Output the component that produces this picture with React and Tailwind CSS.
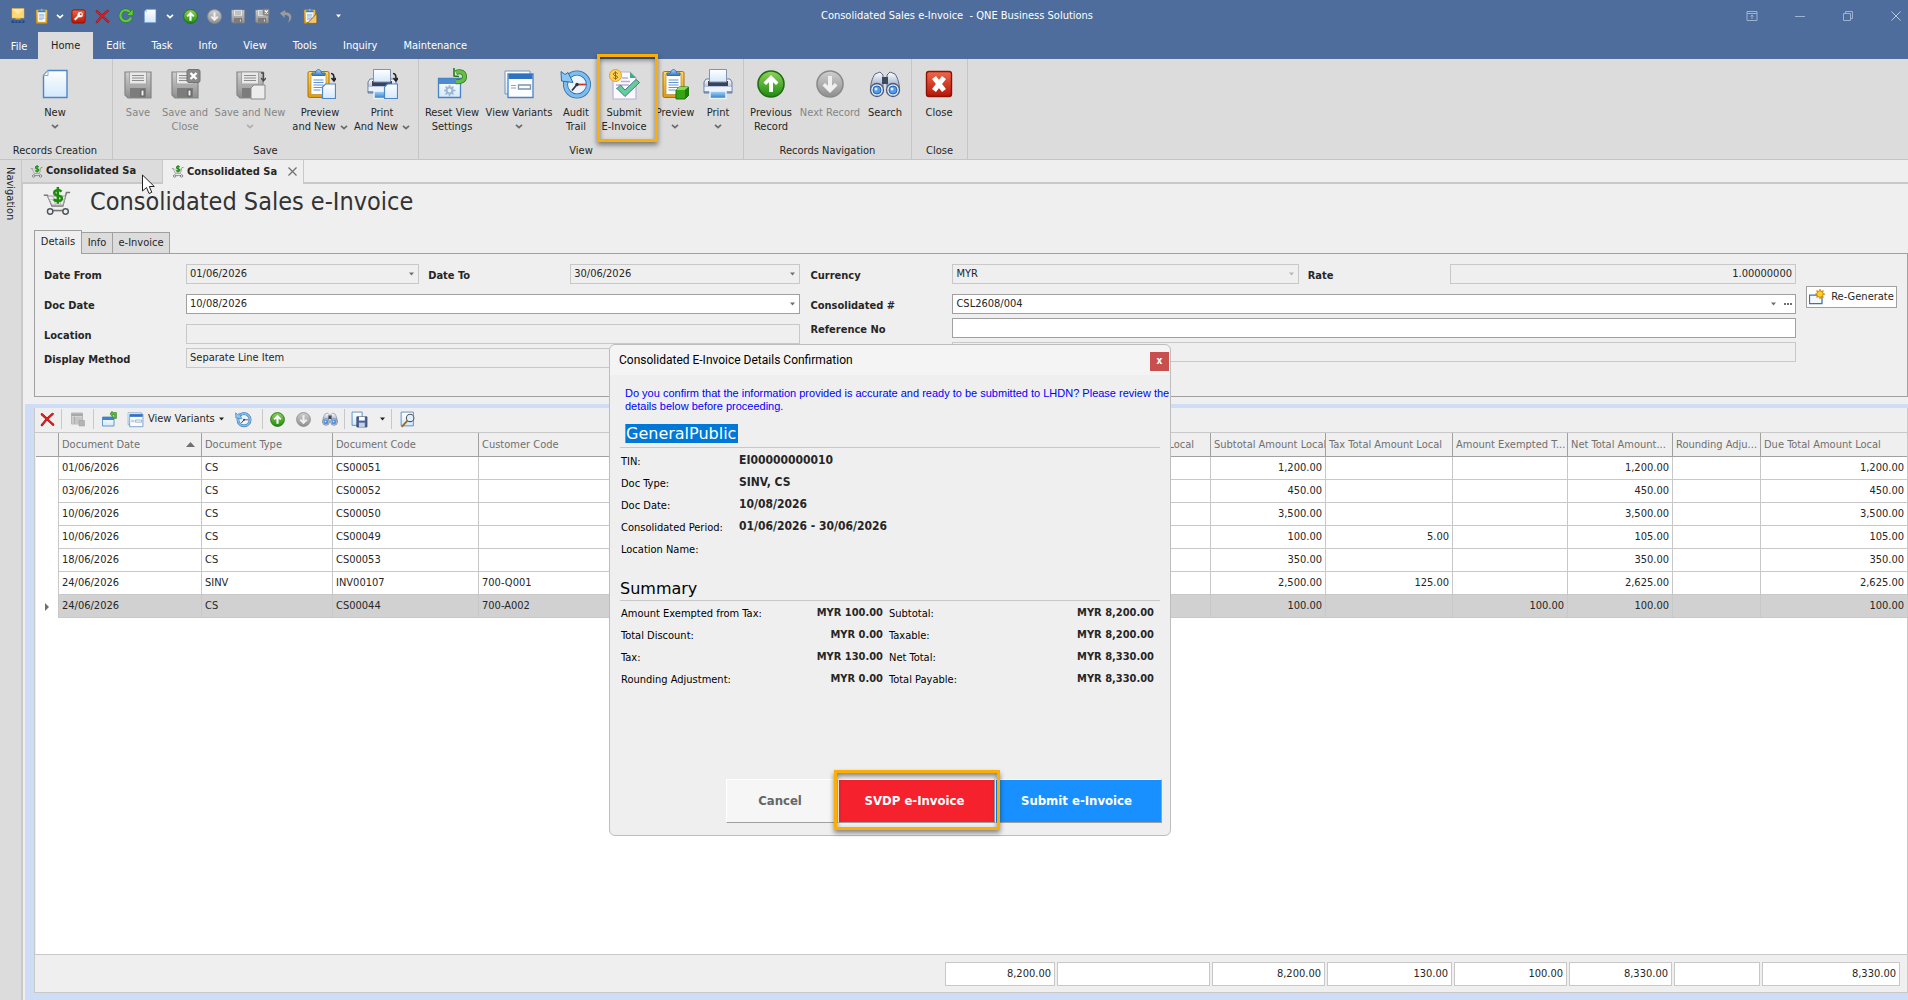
import React from 'react';

// Shared gradients, referenced by id from every icon below
const IconDefs = () => {
  const ramps = [
    ['gGreen', '#8fd35a', '#1f8a10'],
    ['gGray', '#cfcfcf', '#8e8e8e'],
    ['gBlue', '#a9dcff', '#2f78c4'],
    ['gPaper', '#ffffff', '#d3e8fb'],
    ['gGold', '#ffd85a', '#dc9a12'],
    ['gRed', '#f0694c', '#b51507'],
    ['gSteel', '#ffffff', '#7f93b8'],
  ];
  return (
    <svg width="0" height="0" className="absolute" aria-hidden="true">
      <defs>
        {ramps.map(([id, from, to]) => (
          <linearGradient key={id} id={id} x1="0" y1="0" x2="0" y2="1">
            <stop offset="0" stopColor={from} />
            <stop offset="1" stopColor={to} />
          </linearGradient>
        ))}
      </defs>
    </svg>
  );
};

const Icon = ({ size = 32, children }) => (
  <svg width={size} height={size} viewBox="0 0 32 32" fill="none" className="shrink-0" aria-hidden="true">
    {children}
  </svg>
);

const Caret = ({ color = '#6b6b6b' }) => (
  <svg width="8" height="5" viewBox="0 0 8 5" fill="none" className="shrink-0" aria-hidden="true">
    <path d="M1 0.8L4 3.6L7 0.8" stroke={color} strokeWidth="1.7" />
  </svg>
);

const SolidCaret = ({ color = '#222', className = '' }) => (
  <svg width="5" height="4" viewBox="0 0 5 4" className={'shrink-0 ' + className} aria-hidden="true">
    <path d="M0 0.5h5L2.5 3.5z" fill={color} />
  </svg>
);

const NewDoc = ({ size }) => (
  <Icon size={size}>
    <path d="M9 2.5h19v27H4.5V7.5z" fill="url(#gPaper)" stroke="#4d87c7" strokeWidth="1.4" />
    <path d="M9 2.5v5H4.5z" fill="#fff" stroke="#7fabdb" strokeWidth="1" />
  </Icon>
);

const Floppy = ({ size, mark }) => (
  <Icon size={size}>
    <path d="M3 4h26v26H6l-3-3z" fill="url(#gGray)" stroke="#858585" strokeWidth="1.2" />
    <rect x="7.5" y="4" width="17" height="12" fill="#e9e9e9" stroke="#a5a5a5" />
    <path d="M10 7.5h12M10 10h12M10 12.5h12" stroke="#8c8c8c" strokeWidth="1.2" />
    <rect x="8" y="20" width="16" height="9.5" fill="#7c7c7c" />
    <rect x="19" y="22" width="3" height="6" fill="#f2f2f2" stroke="#5c5c5c" />
    {mark === 'close' && (
      <>
        <rect x="18" y="1.5" width="13" height="13" rx="2" fill="#8a8a8a" stroke="#727272" />
        <path d="M21.5 5l6 6M27.5 5l-6 6" stroke="#fff" strokeWidth="2.4" />
      </>
    )}
    {mark === 'new' && (
      <>
        <path d="M20 17h11v14H17V20z" fill="#ececec" stroke="#8a8a8a" />
        <path d="M27 5h2.5v7M27 10l2.5 3 2.5-3" stroke="#4a4a4a" strokeWidth="1.3" />
      </>
    )}
  </Icon>
);

const Clipboard = ({ size, mark }) => (
  <Icon size={size}>
    <rect x="4" y="3.5" width="21" height="26" rx="1.5" fill="url(#gGold)" stroke="#a9720b" />
    <path d="M7 6h15v20.5H7z" fill="#fdfeff" stroke="#b98a2c" strokeWidth=".7" />
    <path d="M9.5 12h10M9.5 14.5h10M9.5 17h10M9.5 19.5h10M9.5 22h7" stroke="#6493cd" strokeWidth="1.1" />
    <path d="M8 7.5V5h3.5c.5-4.5 5.5-4.5 6 0H21v2.5z" fill="url(#gBlue)" stroke="#3c6ca8" />
    {mark === 'cube' && (
      <>
        <path d="M17 22l3-3h9.5v8.5L26 31h-9z" fill="#37a416" stroke="#1f7409" />
        <path d="M17 22l3-3h9.5L26 22z" fill="#83dc52" />
        <path d="M26 22l3.5-3v8.5L26 31z" fill="#1f7d0b" />
      </>
    )}
    {mark === 'new' && <NewMark />}
    {mark === 'ruler' && <path d="M28 10v19H10z" fill="#f3c66b" stroke="#7d5312" strokeWidth="1.5" />}
  </Icon>
);

const NewMark = () => (
  <>
    <path d="M21.5 16h10v14.5h-13V19z" fill="url(#gPaper)" stroke="#4d87c7" strokeWidth="1.2" />
    <path d="M27 5.5c2.5 0 3 1.5 3 6M27.5 10l2.5 3 2-3" stroke="#222" strokeWidth="1.6" />
  </>
);

const Printer = ({ size, mark }) => (
  <Icon size={size}>
    <path d="M2 14l2-3h24l2 3v11H2z" fill="url(#gSteel)" stroke="#6a7ca3" />
    <path d="M6 13h20v5H6z" fill="#36425e" />
    <path d="M7.5 1.5h17V14h-17z" fill="url(#gPaper)" stroke="#8391ad" />
    <path d="M2.5 19h27v4h-27z" fill="#eef2fa" />
    <path d="M8 23h16v7.5H8z" fill="url(#gBlue)" stroke="#eaf4ff" strokeWidth="1.4" />
    {mark === 'new' && <NewMark />}
  </Icon>
);

const ResetView = ({ size }) => (
  <Icon size={size}>
    <path d="M2.5 10.5h22v19h-22z" fill="url(#gPaper)" stroke="#4a83c3" strokeWidth="1.3" />
    <path d="M3 11h21v5H3z" fill="#4b8bd2" />
    <circle cx="13.5" cy="22.5" r="3" stroke="#9db7d2" strokeWidth="2.2" />
    <path d="M13.5 17v2M13.5 26v2.5M8 22.5h2M17 22.5h2.5M9.5 18.5l1.5 1.5M16 25l1.5 1.5M17.5 18.5L16 20M11 25l-1.5 1.5" stroke="#9db7d2" strokeWidth="1.6" />
    <path d="M20 4.5c4.500-2 8.500 0 8.500 4.200 0 3.800-4 5.500-8.500 5" stroke="#2c7a1a" strokeWidth="5" />
    <path d="M20 4.5c4.500-2 8.500 0 8.500 4.200 0 3.800-4 5.500-8.500 5" stroke="#66bd47" strokeWidth="3.4" />
    <path d="M18 0v8l5 .5" stroke="#2c7a1a" strokeWidth="1.6" />
  </Icon>
);

const Variants = ({ size }) => (
  <Icon size={size}>
    <path d="M2 3h25v23H2z" fill="url(#gPaper)" stroke="#6e96c4" />
    <path d="M5 6h25v23.5H5z" fill="#fbfdff" stroke="#4a83c3" strokeWidth="1.3" />
    <path d="M5.5 6h24v5h-24z" fill="#2f72c2" />
    <path d="M8 17.5h5M8 20h5" stroke="#8ba5c0" strokeWidth="1.2" />
    <path d="M15.5 17h12v4h-12z" stroke="#7c93ad" strokeWidth="1.3" />
  </Icon>
);

const History = ({ size }) => (
  <Icon size={size}>
    <circle cx="17" cy="16.5" r="11.5" fill="#eaf5ff" stroke="#2e6cae" strokeWidth="5" />
    <circle cx="17" cy="16.5" r="11.5" stroke="#7fbdec" strokeWidth="3.4" />
    <path d="M1 3.5l4 3 3-2 5 10L1.5 13z" fill="#8cc7f3" stroke="#2e6cae" />
    <path d="M17 16.5l-5 6" stroke="#333" strokeWidth="1.8" />
    <path d="M17 16.5h9" stroke="#d3372a" strokeWidth="1.8" />
    <circle cx="17" cy="16.5" r="1.7" fill="#333" />
  </Icon>
);

const SubmitInvoice = ({ size }) => (
  <Icon size={size}>
    <path d="M5 4h17l6 6v21H5z" fill="#fbfaff" stroke="#b9b0dc" strokeWidth="1.2" />
    <path d="M22 4v6h6z" fill="#3fae7c" />
    <path d="M14 10h6M13 13.5h9M8 17h13M8 20.5h5" stroke="#b8afd8" strokeWidth="1.5" />
    <circle cx="7.5" cy="7.5" r="6" fill="#ffd257" stroke="#d9a22d" />
    <path d="M9.8 5.5c-1.5-1.4-4.4-1-4.4.7 0 2 4.2 1 4.2 2.9 0 1.7-2.9 1.9-4.4.5M7.5 3.3v8.4" stroke="#94690b" />
    <path d="M9 20.5l3.5-3.5 4.5 5 11-10.5 3.5 3L17 28.5z" fill="#63cf95" stroke="#46709c" strokeWidth="1" />
  </Icon>
);

const RoundArrow = ({ size, down, off }) => (
  <Icon size={size}>
    <circle cx="16" cy="16" r="13" fill={off ? 'url(#gGray)' : 'url(#gGreen)'} stroke={off ? '#8a8a8a' : '#1f6d12'} strokeWidth="1.6" />
    <path
      d={down ? 'M16 25l-7.5-7.5 2.5-2.5 3 2.8V8h4v9.8l3-2.8 2.5 2.5z' : 'M16 7l7.5 7.5L21 17l-3-2.8V24h-4v-9.8L11 17l-2.5-2.5z'}
      fill={off ? '#efefef' : '#fff'}
    />
  </Icon>
);

const Binoculars = ({ size }) => (
  <Icon size={size}>
    <path d="M6 6l5-2 3 3v16H1.5C1 18 3 10 6 6zM26 6l-5-2-3 3v16h12.5C31 18 29 10 26 6z" fill="url(#gSteel)" stroke="#5a6884" />
    <path d="M13 9h6v7h-6z" fill="#3d475f" />
    <circle cx="8" cy="22" r="6.5" fill="#dfe8f5" stroke="#4c5b7a" strokeWidth="1.3" />
    <circle cx="24" cy="22" r="6.5" fill="#dfe8f5" stroke="#4c5b7a" strokeWidth="1.3" />
    <circle cx="8" cy="22" r="4" fill="#4f9bf0" stroke="#2763b0" />
    <circle cx="24" cy="22" r="4" fill="#4f9bf0" stroke="#2763b0" />
    <circle cx="7" cy="21" r="1.5" fill="#d9efff" />
    <circle cx="23" cy="21" r="1.5" fill="#d9efff" />
  </Icon>
);

const CloseBox = ({ size }) => (
  <Icon size={size}>
    <rect x="3.5" y="3.5" width="25" height="25" rx="2.5" fill="url(#gRed)" stroke="#8e1206" strokeWidth="1.4" />
    <path d="M11 9.5l10 13M21 9.5l-10 13" stroke="#fff" strokeWidth="5" />
  </Icon>
);

const RedCross = ({ size }) => (
  <Icon size={size}>
    <path d="M4 5c7 6 14 13 24 22M27 4C18 11 11 18 4 28" stroke="#8f0d0d" strokeWidth="5" strokeLinecap="round" />
    <path d="M4 5c7 6 14 13 24 22M27 4C18 11 11 18 4 28" stroke="#e02020" strokeWidth="3.2" strokeLinecap="round" />
  </Icon>
);

const KeyBox = ({ size }) => (
  <Icon size={size}>
    <rect x="2" y="2" width="28" height="28" rx="4" fill="url(#gRed)" stroke="#8e1206" strokeWidth="2" />
    <circle cx="19.5" cy="12" r="5.5" fill="#fff" />
    <circle cx="21" cy="11" r="1.8" fill="#c8331f" />
    <path d="M16 15l-8 8" stroke="#fff" strokeWidth="4" />
  </Icon>
);

const Refresh = ({ size }) => (
  <Icon size={size}>
    <path d="M26 19c-3 8-14 10-19 3S6 5 15 4c4 0 7 2 9 4" stroke="#1f7a14" strokeWidth="6.5" />
    <path d="M26 19c-3 8-14 10-19 3S6 5 15 4c4 0 7 2 9 4" stroke="#5fc83c" strokeWidth="4.5" />
    <path d="M30 2v13H17z" fill="#5fc83c" stroke="#1f7a14" />
  </Icon>
);

const Undo = ({ size }) => (
  <Icon size={size}>
    <path d="M13 2L2 9l10 10v-6c8-1 13 5 7 17 12-9 9-23-6-23z" fill="#9b9b9b" />
  </Icon>
);

const AppLogo = ({ size }) => (
  <Icon size={size}>
    <path d="M4 1h24v19H4z" fill="#ffd873" stroke="#f0b93b" />
    <path d="M4 2l12 10L28 2" fill="#ffe9a8" />
    <path d="M11 20h10v3H11z" fill="#d9a53b" />
    <path d="M3 25h26v5H3z" fill="#1f4a86" />
    <path d="M8 27.5h3M14 27.5h3M21 27.5h4" stroke="#6d92c4" strokeWidth="1.5" />
  </Icon>
);

const Cart = ({ size }) => (
  <Icon size={size}>
    <path d="M2 9h4l5 12h12l4-15h4" stroke="#777" strokeWidth="1.6" />
    <path d="M6 10h20l-3 10H11z" fill="#eee" stroke="#999" strokeWidth="1.1" />
    <path d="M9 14h16M12 10l3 10M22 10l-2 10" stroke="#b5b5b5" />
    <path d="M8 26h20" stroke="#777" strokeWidth="1.8" />
    <circle cx="9" cy="27" r="3" fill="#e6effa" stroke="#555" strokeWidth="1.6" />
    <circle cx="26" cy="27" r="3" fill="#e6effa" stroke="#555" strokeWidth="1.6" />
    <path d="M21.5 5c-2.5-2.5-8-2-8 1.500 0 4 8.500 2 8.500 6 0 3.500-6 4-9 1M17.500 0v18.500" stroke="#1f8a10" strokeWidth="2.8" />
  </Icon>
);

const ListOff = ({ size }) => (
  <Icon size={size}>
    <path d="M3 4h22v22H3z" fill="#d6d6d6" stroke="#a8a8a8" strokeWidth="1.5" />
    <path d="M3 5h22v5H3z" fill="#a8a8a8" />
    <path d="M5 14h18M5 18h18M5 22h18M9 11v15" stroke="#a8a8a8" strokeWidth="1.5" />
    <path d="M18 19h11v11H18z" fill="#b5b5b5" stroke="#999" />
  </Icon>
);

const Reopen = ({ size }) => (
  <Icon size={size}>
    <path d="M1 12h23v18H1z" fill="url(#gPaper)" stroke="#4a83c3" strokeWidth="1.6" />
    <path d="M1 12h23v6H1z" fill="#3f82cc" />
    <path d="M18 3h11v12h-4V8h-4v4l-5-6 5-6z" fill="#57b53a" stroke="#2c7a1a" />
  </Icon>
);

const SaveLayout = ({ size }) => (
  <Icon size={size}>
    <path d="M2 2h19v25H2z" fill="url(#gPaper)" stroke="#4a83c3" strokeWidth="1.6" />
    <path d="M11 11h19v19H11z" fill="#4d6596" stroke="#2b3d66" strokeWidth="1.5" />
    <path d="M15 11h11v7H15z" fill="#fff" />
    <path d="M15 22h11v8H15z" fill="#c5d0e6" />
  </Icon>
);

const FindDoc = ({ size }) => (
  <Icon size={size}>
    <path d="M4 2h23v26H4z" fill="url(#gPaper)" stroke="#4a83c3" strokeWidth="1.6" />
    <circle cx="21" cy="13" r="7" fill="#dff0ff" stroke="#555" strokeWidth="2" />
    <path d="M16 18L5 30" stroke="#9b6a2b" strokeWidth="3.5" />
  </Icon>
);

const Regenerate = () => (
  <Icon size={16}>
    <path d="M1 12h25v17H1z" fill="#f4f9ff" stroke="#3f72a8" strokeWidth="2.5" />
    <circle cx="22" cy="10" r="6.5" fill="#ffcf2f" stroke="#d28b00" strokeWidth="2" />
    <path d="M22 0v4M22 16v4M12 10h4M28 10h4M15 3l3 3M26 14l3 3M29 3l-3 3M18 14l-3 3" stroke="#d28b00" strokeWidth="2.5" />
  </Icon>
);

const TitleBar = () => {
  const slot = 'flex w-6 justify-center';
  return (
    <header className="flex h-8 shrink-0 items-center text-white">
      <div className="flex flex-1 items-center pl-1.5">
        <span className={slot}><AppLogo size={16} /></span>
        <button className={slot} aria-label="Paste"><Clipboard size={17} /></button>
        <button className="flex w-3 justify-center" aria-label="Paste options"><Caret color="#fff" /></button>
        <button className={slot} aria-label="Permissions"><KeyBox size={15} /></button>
        <button className={slot} aria-label="Delete"><RedCross size={15} /></button>
        <button className={slot} aria-label="Refresh"><Refresh size={16} /></button>
        <button className={slot} aria-label="New"><NewDoc size={16} /></button>
        <button className="flex w-4 justify-center" aria-label="New options"><Caret color="#fff" /></button>
        <button className={slot} aria-label="Previous"><RoundArrow size={17} /></button>
        <button className={slot} aria-label="Next"><RoundArrow size={17} down off /></button>
        <button className={slot} aria-label="Save"><Floppy size={16} /></button>
        <button className={slot} aria-label="Save and close"><Floppy size={16} mark="close" /></button>
        <button className={slot} aria-label="Undo"><Undo size={15} /></button>
        <button className={slot} aria-label="Edit layout"><Clipboard size={17} mark="ruler" /></button>
        <button className="flex w-8 justify-center" aria-label="Customize toolbar"><SolidCaret color="#fff" /></button>
      </div>
      <h1 className="pl-1 whitespace-pre">Consolidated Sales e-Invoice  - QNE Business Solutions</h1>
      <div className="flex flex-1 justify-end gap-8 pr-1 text-[#9fb2d0]">
        <button aria-label="Ribbon display options">
          <svg width="16" height="16" viewBox="0 0 16 16" fill="none" stroke="currentColor"><path d="M3 3.5h10v9H3zM3 5.5h10M8 11V7M6.5 8.5L8 7l1.5 1.5" /></svg>
        </button>
        <button aria-label="Minimize">
          <svg width="16" height="16" viewBox="0 0 16 16" fill="none" stroke="currentColor"><path d="M3 8.5h10" /></svg>
        </button>
        <button aria-label="Restore">
          <svg width="16" height="16" viewBox="0 0 16 16" fill="none" stroke="currentColor"><path d="M3.5 5.5h7v7h-7zM5.5 5.5v-2h7v7h-2" /></svg>
        </button>
        <button aria-label="Close window">
          <svg width="16" height="16" viewBox="0 0 16 16" fill="none" stroke="#b9c6dc"><path d="M3.5 3.5l9 9M12.5 3.5l-9 9" /></svg>
        </button>
      </div>
    </header>
  );
};

const RibbonTabs = () => (
  <nav className="flex h-[27px] shrink-0 text-white">
    <button className="w-[38px] pt-0.5">File</button>
    <button className="bg-[#dcdcdc] px-[13px] pt-px text-[#222]">Home</button>
    {['Edit', 'Task', 'Info', 'View', 'Tools', 'Inquiry', 'Maintenance'].map((tab) => (
      <button key={tab} className="px-[13px] pt-px">{tab}</button>
    ))}
  </nav>
);

const RibbonButton = ({ icon, lines, width, caret, inlineCaret, disabled, highlight }) => (
  <button
    disabled={disabled}
    className={'relative flex h-20 flex-col items-center whitespace-nowrap pt-[9px] leading-[14px] ' + width + (disabled ? ' text-[#858585]' : '')}
  >
    {icon}
    <span className="mt-1.5">{lines[0]}</span>
    {lines[1] && (
      <span className="flex items-center gap-1">
        {lines[1]}
        {inlineCaret && <Caret />}
      </span>
    )}
    {caret && <span className="flex h-3 items-center"><Caret color={disabled ? '#b0b0b0' : '#6b6b6b'} /></span>}
    {highlight && (
      <span className="absolute -top-[5px] left-[2px] z-10 h-[88px] w-[61px] border-[3px] border-[#fbad08] shadow-[0_3px_5px_rgba(0,0,0,0.45),inset_0_3px_5px_rgba(0,0,0,0.45)]" />
    )}
  </button>
);

const RibbonGroup = ({ title, className, children }) => (
  <section className={'flex h-full flex-col border-r border-[#c5c5c5] ' + className}>
    <div className="flex flex-1">{children}</div>
    <div className="text-center leading-4">{title}</div>
  </section>
);

const Ribbon = () => (
  <div className="flex h-[101px] shrink-0 border-b border-[#c5c5c5] bg-[#dcdcdc] text-[#262626]">
    <RibbonGroup title="Records Creation" className="w-[113px] pr-0.5">
      <RibbonButton icon={<NewDoc />} lines={['New']} width="w-[110px]" caret />
    </RibbonGroup>
    <RibbonGroup title="Save" className="w-[306px] [&>div:first-child]:pl-1">
      <RibbonButton icon={<Floppy />} lines={['Save']} width="w-[42px]" disabled />
      <RibbonButton icon={<Floppy mark="close" />} lines={['Save and', 'Close']} width="w-[52px]" disabled />
      <RibbonButton icon={<Floppy mark="new" />} lines={['Save and New']} width="w-[78px]" caret disabled />
      <RibbonButton icon={<Clipboard mark="new" />} lines={['Preview', 'and New']} width="w-[62px]" inlineCaret />
      <RibbonButton icon={<Printer mark="new" />} lines={['Print', 'And New']} width="w-[62px]" inlineCaret />
    </RibbonGroup>
    <RibbonGroup title="View" className="w-[325px] [&>div:first-child]:pl-1">
      <RibbonButton icon={<ResetView />} lines={['Reset View', 'Settings']} width="w-[58px]" />
      <RibbonButton icon={<Variants />} lines={['View Variants']} width="w-[76px]" caret />
      <RibbonButton icon={<History />} lines={['Audit', 'Trail']} width="w-[38px]" />
      <RibbonButton icon={<SubmitInvoice />} lines={['Submit', 'E-Invoice']} width="w-[58px]" highlight />
      <RibbonButton icon={<Clipboard mark="cube" />} lines={['Preview']} width="w-[44px]" caret />
      <RibbonButton icon={<Printer />} lines={['Print']} width="w-[42px]" caret />
    </RibbonGroup>
    <RibbonGroup title="Records Navigation" className="w-[168px] [&>div:first-child]:pl-1">
      <RibbonButton icon={<RoundArrow />} lines={['Previous', 'Record']} width="w-[46px]" />
      <RibbonButton icon={<RoundArrow down off />} lines={['Next Record']} width="w-[72px]" disabled />
      <RibbonButton icon={<Binoculars />} lines={['Search']} width="w-[38px]" />
    </RibbonGroup>
    <RibbonGroup title="Close" className="w-14">
      <RibbonButton icon={<CloseBox />} lines={['Close']} width="w-[54px]" />
    </RibbonGroup>
  </div>
);

const DocumentTabs = () => (
  <div className="flex h-6 shrink-0 border-l border-[#c8c8c8] font-bold text-[#262626]">
    <button className="flex w-[141px] items-center gap-[3px] border-r border-b-2 border-[#c8c8c8] bg-[#dcdcdc] pl-2">
      <Cart size={13} />
      Consolidated Sa
    </button>
    <button className="flex w-[141px] items-center gap-[3px] border-r border-[#c8c8c8] pl-2 pb-px">
      <Cart size={13} />
      Consolidated Sa
      <svg width="9" height="9" viewBox="0 0 9 9" className="ml-2"><path d="M.5.5l8 8M8.5.5l-8 8" stroke="#6f6f6f" strokeWidth="1.2" /></svg>
    </button>
    <div className="flex-1 border-b-2 border-[#c8c8c8]" />
  </div>
);

const box = 'h-5 w-full rounded-none border px-[3px] pb-px text-[11px] leading-4 text-[#262626] appearance-none outline-none ';
const active = 'border-[#a0a0a0] bg-white';
const locked = 'border-[#c8c8c8] bg-[#efefef]';

const Field = ({ id, label, value, select, editable, right, caretColor, more, className = '' }) => {
  const style = box + (editable ? active : locked) + (right ? ' text-right' : '');
  return (
    <div className={'flex h-5 items-center ' + className}>
      <label htmlFor={id} className="w-[142px] shrink-0 pt-[3px] font-bold">{label}</label>
      <div className="relative flex-1">
        {select ? (
          <select id={id} className={style} defaultValue={value}>
            <option>{value}</option>
          </select>
        ) : (
          <input id={id} className={style} defaultValue={value} readOnly={!editable} />
        )}
        {select && <SolidCaret color={caretColor || '#6f6f6f'} className={'absolute top-2 ' + (more ? 'right-5' : 'right-[5px]')} />}
        {more && (
          <svg width="8" height="2" viewBox="0 0 8 2" className="absolute top-[9px] right-1">
            <path d="M0 0h2v2H0zM3 0h2v2H3zM6 0h2v2H6z" fill="#6f6f6f" />
          </svg>
        )}
      </div>
    </div>
  );
};

const DetailsForm = () => (
  <div className="pl-[11px]">
    <div className="flex items-end">
      <button className="relative z-10 -mb-px h-6 w-12 border border-b-0 border-[#a0a0a0] bg-[#efefef] pb-0.5">Details</button>
      <button className="h-[21px] w-[31px] border border-b-0 border-l-0 border-[#a0a0a0] bg-[#dcdcdc]">Info</button>
      <button className="h-[21px] w-[57px] border border-b-0 border-l-0 border-[#a0a0a0] bg-[#dcdcdc]">e-Invoice</button>
    </div>
    <form className="flex h-[144px] gap-2.5 border border-[#a0a0a0] pt-2.5 pr-2.5 pl-[9px]">
      <div className="flex flex-[756] flex-col">
        <div className="flex gap-[9px]">
          <Field id="dateFrom" label="Date From" value="01/06/2026" select className="flex-[375]" />
          <Field id="dateTo" label="Date To" value="30/06/2026" select className="flex-[372]" />
        </div>
        <Field id="docDate" label="Doc Date" value="10/08/2026" select editable className="mt-2.5" />
        <Field id="location" label="Location" value="" className="mt-2.5" />
        <Field id="displayMethod" label="Display Method" value="Separate Line Item" className="mt-1" />
      </div>
      <div className="flex flex-[985] flex-col">
        <div className="flex gap-[9px]">
          <Field id="currency" label="Currency" value="MYR" select caretColor="#b5b5b5" className="flex-1" />
          <Field id="rate" label="Rate" value="1.00000000" right className="flex-1" />
        </div>
        <Field id="consolidatedNo" label="Consolidated #" value="CSL2608/004" select editable more className="mt-2.5" />
        <Field id="referenceNo" label="Reference No" value="" editable className="mt-1" />
        <Field id="extra" label="" value="" className="mt-1" />
      </div>
      <button type="button" className="mt-[22px] flex h-[22px] w-[91px] items-center justify-center gap-1.5 border border-[#a0a0a0] bg-white whitespace-nowrap">
        <Regenerate />
        Re-Generate
      </button>
    </form>
  </div>
);

const Sep = () => <span className="h-5 w-px bg-[#c8c8c8]" />;

const GridToolbar = () => (
  <div className="flex h-[25px] items-center border-b border-[#c8c8c8] pb-0.5 pl-0.5">
    <button className="flex w-6 justify-center pr-1" aria-label="Delete row"><RedCross size={15} /></button>
    <Sep />
    <button className="flex w-[31px] justify-center" aria-label="Edit row"><ListOff size={16} /></button>
    <Sep />
    <button className="flex w-[31px] justify-center" aria-label="Reset layout"><Reopen size={16} /></button>
    <button className="flex items-center gap-1 pl-0.5">
      <Variants size={17} />
      View Variants
      <SolidCaret />
    </button>
    <button className="flex w-[38px] justify-center pl-0.5" aria-label="Audit trail"><History size={17} /></button>
    <Sep />
    <button className="flex w-[29px] justify-center" aria-label="Previous row"><RoundArrow size={17} /></button>
    <button className="flex w-6 justify-center" aria-label="Next row"><RoundArrow size={17} down off /></button>
    <button className="flex w-7 justify-center" aria-label="Find"><Binoculars size={16} /></button>
    <Sep />
    <button className="flex w-[30px] justify-center" aria-label="Save layout"><SaveLayout size={17} /></button>
    <button className="flex w-4 justify-center" aria-label="Save layout options"><SolidCaret /></button>
    <Sep />
    <button className="flex w-8 justify-center" aria-label="Print preview"><FindDoc size={17} /></button>
  </div>
);

const columns = [
  { title: '', width: 'w-[23px]' },
  { title: 'Document Date', width: 'w-[143px]', sorted: true },
  { title: 'Document Type', width: 'w-[131px]' },
  { title: 'Document Code', width: 'w-[146px]' },
  { title: 'Customer Code', width: 'w-[131px]' },
  { title: '', width: '' },
  { title: 'Local', width: 'w-[156px]', right: true },
  { title: 'Subtotal Amount Local', width: 'w-[115px]' },
  { title: 'Tax Total Amount Local', width: 'w-[127px]' },
  { title: 'Amount Exempted T...', width: 'w-[115px]' },
  { title: 'Net Total Amount...', width: 'w-[105px]' },
  { title: 'Rounding Adju...', width: 'w-[88px]' },
  { title: 'Due Total Amount Local', width: 'w-[146px]' },
];

// date, type, code, customer, subtotal, tax, exempted, net, due
const rows = [
  ['01/06/2026', 'CS', 'CS00051', '', '1,200.00', '', '', '1,200.00', '1,200.00'],
  ['03/06/2026', 'CS', 'CS00052', '', '450.00', '', '', '450.00', '450.00'],
  ['10/06/2026', 'CS', 'CS00050', '', '3,500.00', '', '', '3,500.00', '3,500.00'],
  ['10/06/2026', 'CS', 'CS00049', '', '100.00', '5.00', '', '105.00', '105.00'],
  ['18/06/2026', 'CS', 'CS00053', '', '350.00', '', '', '350.00', '350.00'],
  ['24/06/2026', 'SINV', 'INV00107', '700-Q001', '2,500.00', '125.00', '', '2,625.00', '2,625.00'],
  ['24/06/2026', 'CS', 'CS00044', '700-A002', '100.00', '', '100.00', '100.00', '100.00'],
];

const InvoiceTable = () => (
  <table className="w-full table-fixed border-separate border-spacing-0 text-[#262626]">
    <thead className="bg-[#efefef]">
      <tr className="h-6">
        {columns.map((col, i) => (
          <th
            key={i}
            className={
              'overflow-hidden border-b border-[#a0a0a0] pl-[3px] font-normal whitespace-nowrap text-[#707070] ' +
              (i < columns.length - 1 ? 'border-r ' : '') + (col.right ? 'pr-4 text-right ' : 'text-left ') + col.width
            }
          >
            <span className={col.sorted ? 'flex items-center justify-between pr-1.5' : ''}>
              {col.title}
              {col.sorted && <svg width="9" height="5" viewBox="0 0 9 5"><path d="M0 5h9L4.5 0z" fill="#6f6f6f" /></svg>}
            </span>
          </th>
        ))}
      </tr>
    </thead>
    <tbody>
      {rows.map((r, i) => {
        const selected = i === rows.length - 1;
        const cells = [r[0], r[1], r[2], r[3], '', '', r[4], r[5], r[6], r[7], '', r[8]];
        return (
          <tr key={r[2]} className="h-[23px]">
            <td className="border-r border-[#c8c8c8] bg-white">
              {selected && <svg width="4" height="8" viewBox="0 0 4 8" className="ml-[9px]"><path d="M0 0l4 4-4 4z" fill="#6f6f6f" /></svg>}
            </td>
            {cells.map((cell, c) => (
              <td
                key={c}
                className={
                  'border-b border-[#c8c8c8] px-[3px] ' + (c < 11 ? 'border-r ' : '') +
                  (c > 3 ? 'text-right ' : '') + (selected ? 'bg-[#d1d1d1]' : 'bg-white')
                }
              >
                {cell}
              </td>
            ))}
          </tr>
        );
      })}
    </tbody>
  </table>
);

const totals = [
  ['8,200.00', 'w-[110px]'],
  ['', 'w-[153px]'],
  ['8,200.00', 'w-[113px]'],
  ['130.00', 'w-[125px]'],
  ['100.00', 'w-[113px]'],
  ['8,330.00', 'w-[103px]'],
  ['', 'w-[86px]'],
  ['8,330.00', 'w-[138px]'],
];

const GridPanel = () => (
  <div className="mt-[7px] flex min-h-0 flex-1 flex-col bg-[#cfdcf5] pt-1 pb-[7px] pl-[9px]">
    <div className="flex min-h-0 flex-1 flex-col border border-t-0 border-[#c8c8c8] bg-[#efefef]">
      <GridToolbar />
      <div className="ml-px min-h-0 flex-1 bg-white">
        <InvoiceTable />
      </div>
      <div className="flex h-[38px] shrink-0 items-center justify-end gap-0.5 border-t border-[#c8c8c8] pr-[7px]">
        {totals.map(([value, width], i) => (
          <div key={i} className={'flex h-6 items-center justify-end border border-[#c8c8c8] bg-white px-[3px] ' + width}>{value}</div>
        ))}
      </div>
    </div>
  </div>
);

const info = [
  ['TIN:', 'EI00000000010'],
  ['Doc Type:', 'SINV, CS'],
  ['Doc Date:', '10/08/2026'],
  ['Consolidated Period:', '01/06/2026 - 30/06/2026'],
  ['Location Name:', ''],
];

const summary = [
  ['Amount Exempted from Tax:', 'MYR 100.00', 'Subtotal:', 'MYR 8,200.00'],
  ['Total Discount:', 'MYR 0.00', 'Taxable:', 'MYR 8,200.00'],
  ['Tax:', 'MYR 130.00', 'Net Total:', 'MYR 8,330.00'],
  ['Rounding Adjustment:', 'MYR 0.00', 'Total Payable:', 'MYR 8,330.00'],
];

const ConfirmDialog = () => (
  <div
    role="dialog"
    aria-labelledby="dialogTitle"
    className="absolute top-[344px] left-[609px] z-20 flex h-[492px] w-[562px] flex-col rounded-md border border-[#bdbdbd] bg-[#efefef] text-black"
  >
    <div className="flex h-[30px] shrink-0 items-center rounded-t-md bg-[#f4f4f4] pl-[9px]">
      <h2 id="dialogTitle" className="flex-1 font-['Roboto',sans-serif] text-[12px]">Consolidated E-Invoice Details Confirmation</h2>
      <button className="mt-0.5 mr-px h-[19px] w-[19px] bg-[#c94f4f] text-[10px] leading-4 font-bold text-white" aria-label="Close dialog">x</button>
    </div>
    <div className="flex flex-1 flex-col pr-2.5 pl-2.5">
      <p className="mt-3 pl-[5px] font-['Liberation_Sans',sans-serif] text-[11px] leading-[13px] whitespace-nowrap text-[#0000ff]">
        Do you confirm that the information provided is accurate and ready to be submitted to LHDN? Please review the
        <br />
        details below before proceeding.
      </p>
      <div className="mt-[11px] flex h-6 border-b border-[#c8c8c8] pl-[5px]">
        <span className="h-[19px] border-l border-[#e08020] bg-[#0078d7] pr-0.5 font-['DejaVu_Sans',sans-serif] text-[16px] leading-[19px] text-white">GeneralPublic</span>
      </div>
      <dl className="mt-0.5">
        {info.map(([label, value]) => (
          <div key={label} className="flex h-[22px] items-center pl-px">
            <dt className="w-[118px] pt-px">{label}</dt>
            <dd className="pb-0.5 text-[12px] font-bold text-[#262626]">{value}</dd>
          </div>
        ))}
      </dl>
      <h3 className="mt-[15px] flex h-[26px] items-center border-b border-[#c8c8c8] pt-[3px] font-['DejaVu_Sans',sans-serif] text-[16px]">Summary</h3>
      <table className="mt-0.5 w-full table-fixed">
        <tbody>
          {summary.map(([a, b, c, d]) => (
            <tr key={a} className="h-[22px]">
              <th scope="row" className="w-[152px] pl-px text-left font-normal">{a}</th>
              <td className="w-[111px] pb-0.5 text-right font-bold text-[#262626]">{b}</td>
              <th scope="row" className="pl-1.5 text-left font-normal">{c}</th>
              <td className="pr-1.5 pb-0.5 text-right font-bold text-[#262626]">{d}</td>
            </tr>
          ))}
        </tbody>
      </table>
      <div className="mt-auto -mr-0.5 mb-3 flex justify-end text-[13px] font-bold">
        <button className="h-11 w-[112px] border border-t-[#fff] border-r-[#c8c8c8] border-b-[#a0a0a0] border-l-[#fff] bg-[#f6f6f6] pr-1 text-[#666]">Cancel</button>
        <button className="relative h-11 w-[157px] border border-t-[#fff] border-r-[#a0a0a0] border-b-[#a0a0a0] border-l-[#fff] bg-[#f5222d] pr-1 text-white">
          SVDP e-Invoice
          <span className="absolute -top-[10px] -left-[5px] z-10 h-[60px] w-[166px] border-[3px] border-[#fbad08] shadow-[0_3px_5px_rgba(0,0,0,0.45),inset_0_3px_5px_rgba(0,0,0,0.45)]" />
        </button>
        <button className="h-11 w-[167px] border border-t-[#fff] border-r-[#a0a0a0] border-b-[#a0a0a0] border-l-[#fff] bg-[#1890ff] pr-1 text-white">Submit e-Invoice</button>
      </div>
    </div>
  </div>
);

const App = () => (
  <div className="relative flex h-screen flex-col overflow-hidden bg-[#4e6d9c] font-['DejaVu_Sans_Condensed','Noto_Sans',sans-serif] text-[11px] leading-4">
    <IconDefs />
    <TitleBar />
    <RibbonTabs />
    <Ribbon />
    <div className="flex min-h-0 flex-1 bg-[#efefef] text-[#262626]">
      <aside className="w-[21px] shrink-0 bg-[#dcdcdc] pt-[7px] pl-0.5">
        <button className="[writing-mode:vertical-rl]">Navigation</button>
      </aside>
      <main className="flex min-w-0 flex-1 flex-col">
        <DocumentTabs />
        <div className="flex min-h-0 flex-1 flex-col border-l-2 border-[#c8c8c8]">
          <div className="flex h-[46px] shrink-0 items-start gap-[19px] pl-[19px]">
            <div className="pt-[3px]"><Cart size={29} /></div>
            <h2 className="text-[25px] leading-9 text-[#333]">Consolidated Sales e-Invoice</h2>
          </div>
          <DetailsForm />
          <div className="flex min-h-0 flex-1 flex-col pl-0.5">
            <GridPanel />
          </div>
        </div>
      </main>
    </div>
    <ConfirmDialog />
    <svg width="14" height="21" viewBox="0 0 14 21" className="absolute top-[174px] left-[141px] z-30" aria-hidden="true">
      <path d="M1.5 1v16l4-3.5 2.5 6 2.8-1.2L8.3 12.5h5z" fill="#fff" stroke="#222" />
    </svg>
  </div>
);

export default App;
